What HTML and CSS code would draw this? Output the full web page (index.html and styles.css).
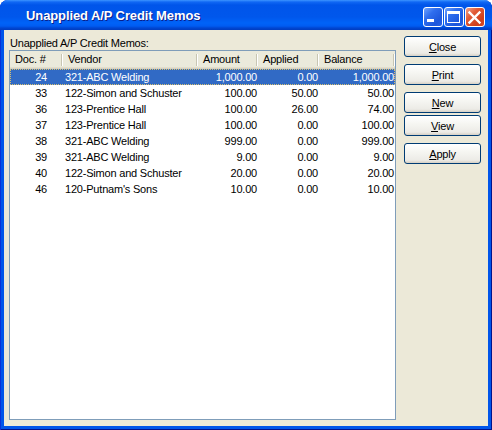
FILE: index.html
```html
<!DOCTYPE html>
<html lang="en">
<head>
    <meta charset="UTF-8">
    <title>Unapplied A/P Credit Memos</title>
    <link rel="stylesheet" href="styles.css">
</head>
<body>
    <div class="window">
        <!-- title bar -->
        <div class="titlebar">
            <span class="title">Unapplied A/P Credit Memos</span>
            <span class="cap-btn">
                <svg width="18" height="18" viewBox="0 0 18 18"><rect x="3" y="11" width="7" height="3" fill="#fff"/></svg>
            </span>
            <span class="cap-btn">
                <svg width="18" height="18" viewBox="0 0 18 18"><path d="M2 3h13v12H2z M3 6v8h11V6z" fill="#fff" fill-rule="evenodd"/></svg>
            </span>
            <span class="cap-btn close-btn">
                <svg width="18" height="18" viewBox="0 0 18 18"><path d="M3.5 4.5l10 10M13.5 4.5l-10 10" stroke="#fff" stroke-width="2.4" stroke-linecap="square"/></svg>
            </span>
        </div>

        <!-- dialog body -->
        <div class="frame">
            <div class="list-panel">
                <div class="label">Unapplied A/P Credit Memos:</div>
                <div class="list">
                    <div class="list-head">
                        <div class="col c-doc">Doc. #</div>
                        <div class="col c-vendor">Vendor</div>
                        <div class="col c-amt">Amount</div>
                        <div class="col c-app">Applied</div>
                        <div class="col c-bal">Balance</div>
                    </div>
                    <div class="row selected">
                        <div class="cell c-doc">24</div>
                        <div class="cell c-vendor">321-ABC Welding</div>
                        <div class="cell c-amt">1,000.00</div>
                        <div class="cell c-app">0.00</div>
                        <div class="cell c-bal">1,000.00</div>
                    </div>
                    <div class="row">
                        <div class="cell c-doc">33</div>
                        <div class="cell c-vendor">122-Simon and Schuster</div>
                        <div class="cell c-amt">100.00</div>
                        <div class="cell c-app">50.00</div>
                        <div class="cell c-bal">50.00</div>
                    </div>
                    <div class="row">
                        <div class="cell c-doc">36</div>
                        <div class="cell c-vendor">123-Prentice Hall</div>
                        <div class="cell c-amt">100.00</div>
                        <div class="cell c-app">26.00</div>
                        <div class="cell c-bal">74.00</div>
                    </div>
                    <div class="row">
                        <div class="cell c-doc">37</div>
                        <div class="cell c-vendor">123-Prentice Hall</div>
                        <div class="cell c-amt">100.00</div>
                        <div class="cell c-app">0.00</div>
                        <div class="cell c-bal">100.00</div>
                    </div>
                    <div class="row">
                        <div class="cell c-doc">38</div>
                        <div class="cell c-vendor">321-ABC Welding</div>
                        <div class="cell c-amt">999.00</div>
                        <div class="cell c-app">0.00</div>
                        <div class="cell c-bal">999.00</div>
                    </div>
                    <div class="row">
                        <div class="cell c-doc">39</div>
                        <div class="cell c-vendor">321-ABC Welding</div>
                        <div class="cell c-amt">9.00</div>
                        <div class="cell c-app">0.00</div>
                        <div class="cell c-bal">9.00</div>
                    </div>
                    <div class="row">
                        <div class="cell c-doc">40</div>
                        <div class="cell c-vendor">122-Simon and Schuster</div>
                        <div class="cell c-amt">20.00</div>
                        <div class="cell c-app">0.00</div>
                        <div class="cell c-bal">20.00</div>
                    </div>
                    <div class="row">
                        <div class="cell c-doc">46</div>
                        <div class="cell c-vendor">120-Putnam's Sons</div>
                        <div class="cell c-amt">10.00</div>
                        <div class="cell c-app">0.00</div>
                        <div class="cell c-bal">10.00</div>
                    </div>
                </div>
            </div>

            <!-- buttons -->
            <div class="buttons">
                <button type="button"><u>C</u>lose</button>
                <button type="button"><u>P</u>rint</button>
                <button type="button" class="gap-small"><u>N</u>ew</button>
                <button type="button"><u>V</u>iew</button>
                <button type="button"><u>A</u>pply</button>
            </div>
        </div>
    </div>
</body>
</html>
```

FILE: styles.css
```css
*{
    margin: 0;
    padding: 0;
    box-sizing: border-box;
}
body{
    width: 492px;
    height: 430px;
    overflow: hidden;
    background: #fff;
    font-family: "Liberation Sans", Arial, sans-serif;
    font-size: 11px;
    letter-spacing: -0.2px;
    color: #000;
}
.window{
    width: 492px;
    height: 430px;
    display: flex;
    flex-direction: column;
    background: #0055ea;
    border-radius: 8px 8px 0 0;
    box-shadow: inset 1px 0 #0831d9, inset -1px -1px #00138c;
}
.titlebar{
    height: 30px;
    display: flex;
    align-items: center;
    padding: 0 7px 0 26px;
    border-radius: 8px 8px 0 0;
    background: linear-gradient(to bottom, #3d95ff 0, #1068f4 2px, #0055ea 5px, #0057ec 17px, #0063f8 23px, #005cf2 26px, #0046d2 28px, #003cc0 30px);
}
.title{
    flex: 1;
    color: #fff;
    font-weight: bold;
    font-size: 13px;
    letter-spacing: -0.1px;
    text-shadow: 1px 1px #0a1e8a;
}
.cap-btn{
    width: 20px;
    height: 20px;
    margin: 4px 0 0 1px;
    border: 1px solid #fff;
    border-radius: 3px;
    display: flex;
    background: linear-gradient(135deg, #6fa4ff 0, #2f6eee 35%, #1d57dc 75%, #2a62e4 100%);
}
.close-btn{
    background: linear-gradient(135deg, #f2a28a 0, #e15b37 35%, #cf3f1b 75%, #d84a26 100%);
}
.frame{
    flex: 1;
    margin: 0 4px 4px 4px;
    padding: 6px 7px 6px 5px;
    background: #ece9d8;
    display: flex;
    gap: 8px;
}
.list-panel{
    width: 387px;
    display: flex;
    flex-direction: column;
}
.label{
    height: 14px;
    line-height: 14px;
    padding-left: 1px;
}
.list{
    flex: 1;
    background: #fff;
    border: 1px solid #7f9db9;
}
.list-head{
    display: flex;
    height: 18px;
    background: #ebeadb;
    box-shadow: inset 0 -1px #d6d2c2, inset 0 -2px #e2decd;
}
.col{
    line-height: 17px;
    padding-left: 5px;
    background-image: linear-gradient(#c7c5b2, #c7c5b2), linear-gradient(#fff, #fff);
    background-size: 1px 12px, 1px 12px;
    background-position: right 1px top 3px, right 0 top 3px;
    background-repeat: no-repeat;
}
.row{
    display: flex;
    height: 16px;
    line-height: 16px;
}
.row.selected{
    background: #316ac5;
    color: #fff;
    outline: 1px dotted #d8c070;
    outline-offset: -1px;
}
.cell{
    white-space: nowrap;
    overflow: hidden;
}
.c-doc{
    width: 53px;
}
.c-vendor{
    width: 135px;
}
.c-amt{
    width: 60px;
}
.c-app{
    width: 61px;
}
.c-bal{
    width: 76px;
}
.cell.c-doc{
    text-align: right;
    padding-right: 16px;
}
.cell.c-vendor{
    padding-left: 2px;
}
.cell.c-amt,.cell.c-app,.cell.c-bal{
    text-align: right;
    padding-right: 1px;
}
.buttons{
    width: 77px;
    display: flex;
    flex-direction: column;
    gap: 7px;
}
.buttons .gap-small{
    margin-bottom: -5px;
}
button{
    height: 21px;
    font-family: inherit;
    font-size: 11px;
    letter-spacing: -0.2px;
    color: #000;
    border: 1px solid #003c74;
    border-radius: 3px;
    background: linear-gradient(to bottom, #fff 0, #f6f6f2 40%, #ecebe6 85%, #d6d0c5 100%);
}
button u{
    text-decoration: underline;
}
```
